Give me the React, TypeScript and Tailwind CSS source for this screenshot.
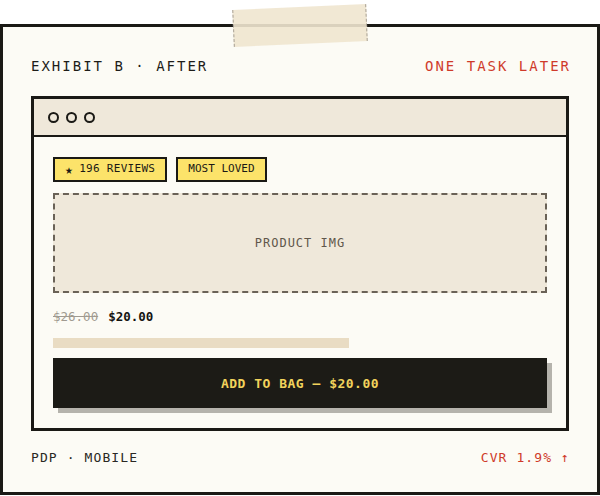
import React from "react";

const mono = { fontFamily: '"DejaVu Sans Mono", "Liberation Mono", monospace' };

export default function App() {
  return (
    <div className="relative w-[600px] h-[496px] bg-white pt-[24px]" style={mono}>
      <div className="h-[471px] border-[3px] border-[#1a1915] bg-[#fcfbf5] px-[28px] pt-[29px] flex flex-col">
        <div className="flex items-center justify-between h-[20px] text-[14px] tracking-[2px]">
          <span className="text-[#1e1d19]">EXHIBIT B · AFTER</span>
          <span className="text-[#cf3a2a] mr-[-2px]">ONE TASK LATER</span>
        </div>
        <div className="mt-[20px] border-[3px] border-[#1a1915] bg-[#fcfbf5]">
          <div className="h-[38px] bg-[#efe8da] border-b-2 border-[#1a1915] flex items-center gap-[7px] pl-[14px]">
            <span className="w-[11px] h-[11px] rounded-full border-2 border-[#1a1915]" />
            <span className="w-[11px] h-[11px] rounded-full border-2 border-[#1a1915]" />
            <span className="w-[11px] h-[11px] rounded-full border-2 border-[#1a1915]" />
          </div>
          <div className="px-[19px] pt-[20px] pb-[20px] flex flex-col">
            <div className="flex gap-[9px]">
              <span className="h-[25px] border-2 border-[#1a1915] bg-[#fce36a] px-[10px] flex items-center gap-[6px] text-[11px] tracking-[0.3px] text-[#1a1915]">
                <span className="text-[13px] leading-none">★</span>
                <span>196 REVIEWS</span>
              </span>
              <span className="h-[25px] border-2 border-[#1a1915] bg-[#fce36a] px-[10px] flex items-center text-[11px] text-[#1a1915]">
                MOST LOVED
              </span>
            </div>
            <div className="mt-[11px] h-[100px] border-2 border-dashed border-[#6a6257] bg-[#efe8da] flex items-center justify-center text-[12px] tracking-[1px] text-[#5f574b]">
              PRODUCT IMG
            </div>
            <div className="mt-[15px] h-[18px] flex items-center gap-[10px] text-[12.5px]">
              <span className="text-[#a09a90] line-through">$26.00</span>
              <span className="font-bold text-[#141310]">$20.00</span>
            </div>
            <div className="mt-[12px] h-[10px] w-[296px] bg-[#e9dcc3]" />
            <div className="mt-[10px] h-[50px] pt-[2px] bg-[#1c1b16] shadow-[5px_5px_0_#b5b3ac] flex items-center justify-center text-[13px] tracking-[0.5px] font-semibold text-[#f2d35c]">
              ADD TO BAG — $20.00
            </div>
          </div>
        </div>
        <div className="mt-[17px] flex items-center justify-between h-[20px] text-[13px] tracking-[1.1px]">
          <span className="text-[#2a2823]">PDP · MOBILE</span>
          <span className="text-[#cf3a2a] mr-[-1px]">CVR 1.9% ↑</span>
        </div>
      </div>
      <div className="absolute left-[233px] top-[7px] w-[134px] h-[37px] bg-[#efe6cf]/90 border-x border-dashed border-[#a8a195] -rotate-[2.5deg]" />
    </div>
  );
}
